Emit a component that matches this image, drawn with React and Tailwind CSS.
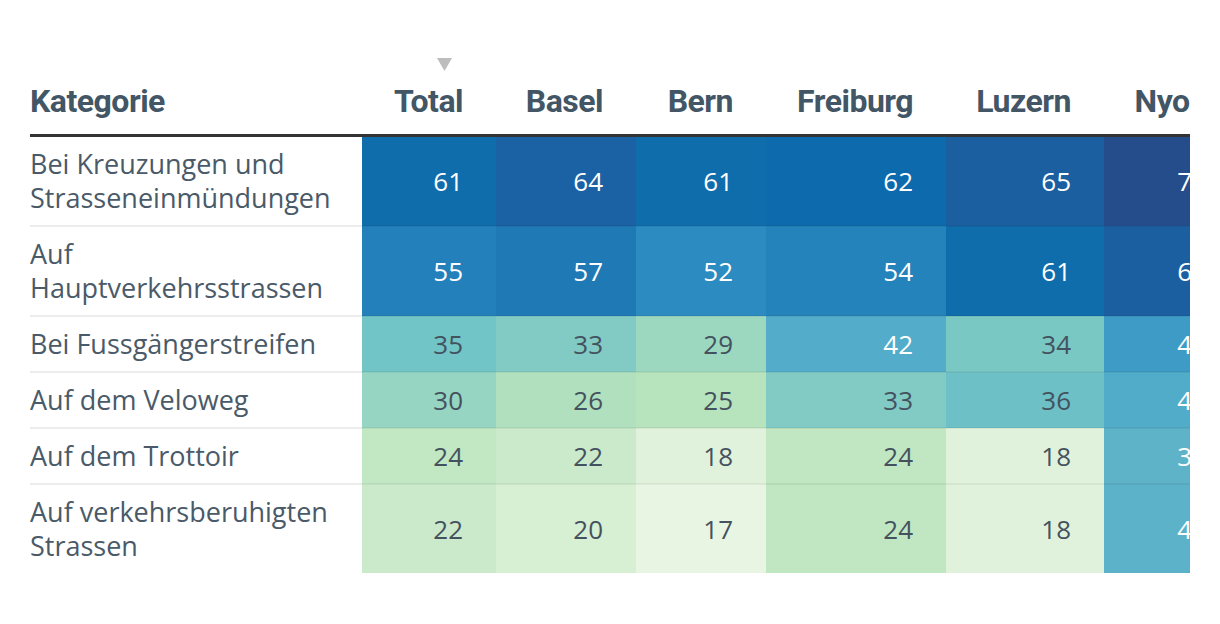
import React from 'react';

const columns = [
  { key: 'total', label: 'Total', width: 'w-[134px]' },
  { key: 'basel', label: 'Basel', width: 'w-[140px]' },
  { key: 'bern', label: 'Bern', width: 'w-[130px]' },
  { key: 'freiburg', label: 'Freiburg', width: 'w-[180px]' },
  { key: 'luzern', label: 'Luzern', width: 'w-[158px]' },
  { key: 'nyon', label: 'Nyon', width: 'w-[136px]' },
];

// value, background, light text?
const rows = [
  {
    label: ['Bei Kreuzungen und', 'Strasseneinmündungen'],
    cells: [
      [61, 'bg-[#106dab]', true],
      [64, 'bg-[#1a62a3]', true],
      [61, 'bg-[#106dab]', true],
      [62, 'bg-[#0d6aac]', true],
      [65, 'bg-[#1c5fa1]', true],
      [71, 'bg-[#264d8b]', true],
    ],
  },
  {
    label: ['Auf', 'Hauptverkehrsstrassen'],
    cells: [
      [55, 'bg-[#2380ba]', true],
      [57, 'bg-[#1f79b5]', true],
      [52, 'bg-[#2c8bc0]', true],
      [54, 'bg-[#2583bb]', true],
      [61, 'bg-[#106dab]', true],
      [66, 'bg-[#1c5fa1]', true],
    ],
  },
  {
    label: ['Bei Fussgängerstreifen'],
    cells: [
      [35, 'bg-[#71c5c6]', false],
      [33, 'bg-[#81cbc4]', false],
      [29, 'bg-[#9cd8c0]', false],
      [42, 'bg-[#53acca]', true],
      [34, 'bg-[#79c8c4]', false],
      [45, 'bg-[#3e9bc6]', true],
    ],
  },
  {
    label: ['Auf dem Veloweg'],
    cells: [
      [30, 'bg-[#96d5c2]', false],
      [26, 'bg-[#b1e0be]', false],
      [25, 'bg-[#b7e3bd]', false],
      [33, 'bg-[#81cbc4]', false],
      [36, 'bg-[#6cc0c6]', false],
      [43, 'bg-[#50acc9]', true],
    ],
  },
  {
    label: ['Auf dem Trottoir'],
    cells: [
      [24, 'bg-[#c1e7c3]', false],
      [22, 'bg-[#cbeacb]', false],
      [18, 'bg-[#e1f2dc]', false],
      [24, 'bg-[#c0e6c2]', false],
      [18, 'bg-[#e1f2dc]', false],
      [38, 'bg-[#5eb3c9]', true],
    ],
  },
  {
    label: ['Auf verkehrsberuhigten', 'Strassen'],
    cells: [
      [22, 'bg-[#cbeacb]', false],
      [20, 'bg-[#d7efd3]', false],
      [17, 'bg-[#e9f5e3]', false],
      [24, 'bg-[#c0e6c2]', false],
      [18, 'bg-[#e1f2dc]', false],
      [41, 'bg-[#5bb2c9]', true],
    ],
  },
];

const App = () => {
  return (
    <div className="w-[1220px] h-[624px] bg-white pt-[40px] pl-[30px]" style={{ fontFamily: '"Open Sans", sans-serif' }}>
      <div className="w-[1160px] overflow-hidden">
        <table className="w-[1210px] table-fixed border-collapse">
          <colgroup>
            <col className="w-[332px]" />
            {columns.map((c) => (
              <col key={c.key} className={c.width} />
            ))}
          </colgroup>
          <thead>
            <tr className="border-b-[3px] border-[#333]">
              <th className="h-[95px] align-bottom pb-[16px] text-left text-[32px] leading-[34px] font-bold tracking-[-0.5px] text-[#425666] font-[Roboto]">
                Kategorie
              </th>
              {columns.map((c, i) => (
                <th
                  key={c.key}
                  className="relative h-[95px] align-bottom pb-[16px] pr-[33px] text-right text-[32px] leading-[34px] font-bold tracking-[-0.5px] text-[#425666] font-[Roboto]"
                >
                  {i === 0 && (
                    <svg className="absolute top-[18px] right-[44px] w-[15px] h-[13px]" viewBox="0 0 15 13">
                      <path d="M0 0h15L7.5 13z" fill="#bdbdbd" />
                    </svg>
                  )}
                  {c.label}
                </th>
              ))}
            </tr>
          </thead>
          <tbody>
            {rows.map((r, ri) => (
              <tr key={ri}>
                <td
                  className={`py-[10px] text-[27px] leading-[34px] text-[#4a5a68] ${
                    ri < rows.length - 1 ? 'border-b-2 border-[#ececec]' : ''
                  }`}
                >
                  {r.label.map((l, li) => (
                    <div key={li} className="whitespace-nowrap">{l}</div>
                  ))}
                </td>
                {r.cells.map(([v, bg, light], ci) => (
                  <td
                    key={ci}
                    className={`${bg} pr-[33px] py-[10px] text-right text-[26px] leading-[34px] tabular-nums ${
                      light ? 'text-white' : 'text-[#44525f]'
                    } ${ri < rows.length - 1 ? 'border-b-2 border-black/5' : ''}`}
                  >
                    {v}
                  </td>
                ))}
              </tr>
            ))}
          </tbody>
        </table>
      </div>
    </div>
  );
};

export default App;
